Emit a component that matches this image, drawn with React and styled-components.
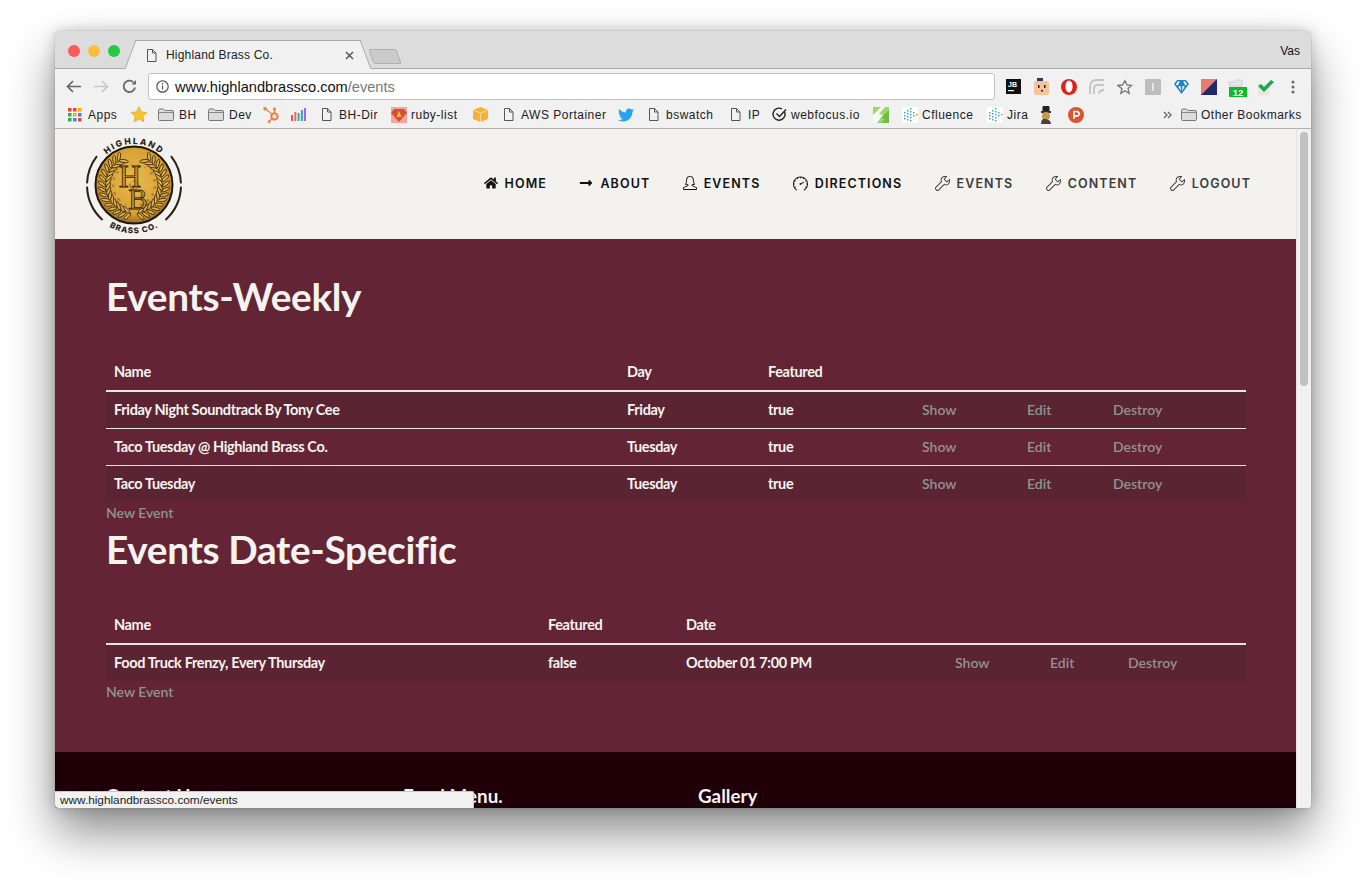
import React from "react";
import styled, { createGlobalStyle } from "styled-components";
import { FaHome, FaLongArrowAltRight, FaTwitter } from "react-icons/fa";
import { SlWrench, SlSpeedometer, SlUserFemale } from "react-icons/sl";
import { SiHubspot } from "react-icons/si";

const Global = createGlobalStyle`
  html, body { margin: 0; padding: 0; background: #fff; }
  * { box-sizing: border-box; }
`;

const Desktop = styled.div`
  width: 1367px;
  height: 889px;
  padding: 31px 56px 0 55px;
  overflow: hidden;
  background: #fff;
  font-family: "Liberation Sans", Arial, sans-serif;
`;

const BrowserWindow = styled.div`
  width: 1256px;
  height: 777px;
  border-radius: 5px 5px 3px 3px;
  overflow: hidden;
  display: flex;
  flex-direction: column;
  box-shadow: 0 24px 48px rgba(0, 0, 0, 0.46), 0 0 14px rgba(0, 0, 0, 0.2), 0 0 1px rgba(0, 0, 0, 0.5);
`;

const TitleBar = styled.div`
  height: 38px;
  flex: none;
  display: flex;
  align-items: flex-end;
  background: #dcdcdc;
  border-bottom: 1px solid #a8a8a8;
`;

const Lights = styled.div`
  display: flex;
  gap: 8px;
  align-self: flex-start;
  margin: 14px 0 0 13px;
`;

const Light = styled.span`
  width: 12px;
  height: 12px;
  border-radius: 50%;
  background: ${p => p.$c};
`;

const Tab = styled.div`
  position: relative;
  width: 222px;
  height: 29px;
  margin: 0 0 -1px 17px;
  padding: 0 5px 0 9px;
  display: flex;
  align-items: center;
  gap: 9px;
  font-size: 12px;
  color: #222;
  background: #f1f1f1;
  border-top: 1px solid #a8a8a8;
  &::before,
  &::after {
    content: "";
    position: absolute;
    top: -1px;
    bottom: 0;
    width: 14px;
    background: #f1f1f1;
    border-top: 1px solid #a8a8a8;
  }
  &::before {
    left: -7px;
    transform: skewX(-21deg);
    border-left: 1px solid #a8a8a8;
  }
  &::after {
    right: -7px;
    transform: skewX(21deg);
    border-right: 1px solid #a8a8a8;
  }
`;

const TabTitle = styled.span`
  position: relative;
  z-index: 1;
  flex: 1;
  letter-spacing: 0.2px;
`;

const TabClose = styled.span`
  position: relative;
  z-index: 1;
  display: flex;
  color: #555;
`;

const NewTab = styled.div`
  width: 28px;
  height: 15px;
  margin: 0 0 4px 12px;
  background: #cbcbcb;
  border: 1px solid #b0b0b0;
  border-radius: 2px;
  transform: skewX(20deg);
`;

const Profile = styled.div`
  margin-left: auto;
  align-self: flex-start;
  padding: 13px 11px 0 0;
  font-size: 12px;
  color: #111;
`;

const Toolbar = styled.div`
  height: 32px;
  flex: none;
  display: flex;
  align-items: flex-end;
  padding: 0 4px 1px 4px;
  background: #f1f1f1;
`;

const ToolSlot = styled.div`
  width: 28px;
  height: 27px;
  flex: none;
  display: flex;
  align-items: center;
  justify-content: center;
  position: relative;
`;

const Address = styled.div`
  flex: 1;
  height: 27px;
  margin: 0 4px 0 5px;
  padding-left: 7px;
  display: flex;
  align-items: center;
  gap: 6px;
  background: #fff;
  border: 1px solid #c2c2c2;
  border-radius: 3px;
  font-size: 14.6px;
  color: #111;
`;

const AddressPath = styled.span`
  color: #777;
`;

const Bookmarks = styled.div`
  height: 28px;
  flex: none;
  display: flex;
  align-items: center;
  padding: 0 0 0 13px;
  background: #f1f1f1;
  border-bottom: 1px solid #b0b0b0;
  font-size: 12px;
  letter-spacing: 0.5px;
  color: #1c1c1c;
`;

const Bookmark = styled.div`
  width: ${p => p.$w}px;
  flex: none;
  display: flex;
  align-items: center;
  gap: ${p => p.$gap || 5}px;
  white-space: nowrap;
`;

const Viewport = styled.div`
  position: relative;
  flex: 1;
  min-height: 0;
  display: flex;
  overflow: hidden;
`;

const Site = styled.div`
  flex: 1;
  min-width: 0;
  font-family: Lato, sans-serif;
`;

const Track = styled.div`
  width: 15px;
  flex: none;
  padding: 3px;
  background: #f1f1f1;
  border-left: 1px solid #e4e4e4;
`;

const Thumb = styled.div`
  height: 254px;
  border-radius: 5px;
  background: #c1c1c1;
`;

const SiteHeader = styled.header`
  height: 110px;
  display: flex;
  align-items: center;
  justify-content: space-between;
  padding: 0 45px 0 30px;
  background: #f3f2ee;
`;

const Nav = styled.nav`
  display: flex;
  gap: 32.4px;
  padding-bottom: 2px;
`;

const NavLink = styled.a`
  display: flex;
  align-items: center;
  gap: 7px;
  font-family: Inter, sans-serif;
  font-size: 12.5px;
  font-weight: 600;
  letter-spacing: 1.1px;
  color: ${p => (p.$muted ? "#3c3c3c" : "#111")};
`;

const Main = styled.main`
  padding: 34px 49px 49px 51px;
  background: #632536;
`;

const Heading = styled.h1`
  margin: ${p => (p.$second ? "2px" : "0")} 0 33px;
  font-family: Lato, sans-serif;
  font-size: 38.8px;
  line-height: 46px;
  font-weight: 700;
  letter-spacing: -0.35px;
  color: #f5f3ee;
`;

const Table = styled.table`
  width: 1140px;
  table-layout: fixed;
  border-collapse: separate;
  border-spacing: 0;
  font-size: 14.5px;
  letter-spacing: -0.36px;
  font-weight: 700;
  color: #f5f3ee;
`;

const Th = styled.th`
  padding: 9px 8px 7px;
  line-height: 22px;
  text-align: left;
  font-weight: 700;
  border-bottom: 2px solid #e6e6e6;
`;

const Row = styled.tr`
  background: ${p => (p.$odd ? "#5b2433" : "transparent")};
`;

const Td = styled.td`
  padding: 8px;
  line-height: 20px;
  border-top: ${p => (p.$first ? "0" : "1px solid #e6e6e6")};
`;

const RowLink = styled.a`
  font-size: 14px;
  letter-spacing: 0;
  color: #929292;
  font-weight: 600;
`;

const NewLink = styled.a`
  display: block;
  font-size: 14px;
  line-height: 22px;
  font-weight: 600;
  color: #929292;
`;

const SiteFooter = styled.footer`
  height: 200px;
  display: flex;
  padding: 33px 0 0 51px;
  background: #1f0008;
`;

const FooterColumn = styled.div`
  width: ${p => p.$w}px;
  flex: none;
  font-size: 18.8px;
  line-height: 22px;
  font-weight: 700;
  color: #f5f3ee;
`;

const StatusBubble = styled.div`
  position: absolute;
  left: 0;
  bottom: 0;
  width: 419px;
  height: 17px;
  padding-left: 5px;
  display: flex;
  align-items: center;
  font-family: "Liberation Sans", Arial, sans-serif;
  font-size: 11.8px;
  color: #222;
  background: #f1f1f1;
  border-top: 1px solid #c8c8c8;
  border-right: 1px solid #c8c8c8;
  border-radius: 0 2px 0 3px;
`;

const Page = () => (
  <svg width="11" height="13" viewBox="0 0 11 13" fill="none" stroke="#555" strokeWidth="1">
    <path d="M1.500.5h5l3.500 3.500v8.500h-8.500zM6.500.5v3.500h3.500" />
  </svg>
);

const Folder = () => (
  <svg width="16" height="13" viewBox="0 0 16 13">
    <path d="M.5 2.500Q.5 1 2 1h3.500l1.500 1.500h7q1.500 0 1.500 1.500v7.500q0 1-1 1h-13q-1 0-1-1z" fill="#dcdcdc" stroke="#777" />
    <path d="M.5 4.500h15" stroke="#888" />
  </svg>
);

const Apps = () => (
  <svg width="14" height="14" viewBox="0 0 14 14">
    {["#e8453c", "#e8453c", "#f4b400", "#34a853", "#f4b400", "#4285f4", "#34a853", "#4285f4", "#e8453c"].map((c, i) => (
      <rect key={i} x={(i % 3) * 5} y={Math.floor(i / 3) * 5} width="3.500" height="3.500" fill={c} />
    ))}
  </svg>
);

const Star = () => (
  <svg width="18" height="17" viewBox="0 0 24 24">
    <path d="M12 1l3.300 7.300 7.900.9-5.900 5.300 1.700 7.800L12 18.300 5 22.300l1.700-7.800L.8 9.200l7.900-.9z" fill="#f5c32c" stroke="#e89f1c" />
  </svg>
);

const Bars = () => (
  <svg width="15" height="13" viewBox="0 0 15 13">
    <rect x="0" y="7" width="2" height="6" fill="#ef4c7a" />
    <rect x="3.300" y="4" width="2" height="9" fill="#f26a4b" />
    <rect x="6.600" y="5" width="2" height="8" fill="#2ab5a5" />
    <rect x="9.900" y="2" width="2" height="11" fill="#4a8fe0" />
    <rect x="13" y="0" width="2" height="13" fill="#a46ad8" />
  </svg>
);

const Ruby = () => (
  <svg width="16" height="16" viewBox="0 0 16 16">
    <rect width="16" height="16" fill="#eda79c" />
    <path d="M3 2h10l3 4-8 9-8-9z" fill="#dd4a36" />
    <path d="M5.500 10l2.500-6 2.500 6z" fill="#f3c244" />
  </svg>
);

const Cube = () => (
  <svg width="15" height="15" viewBox="0 0 15 15">
    <path d="M7.500 0L15 3v9l-7.500 3L0 12V3z" fill="#f4b13c" />
    <path d="M0 3l7.500 3L15 3M7.500 6v9" stroke="#fbdb94" fill="none" />
  </svg>
);

const Check = () => (
  <svg width="15" height="15" viewBox="0 0 15 15" fill="none" stroke="#222" strokeWidth="1.400">
    <path d="M12.600 5A6 6 0 1 1 10 2" />
    <path d="M4.500 6.500l3 3L14 2.500" />
  </svg>
);

const GreenTile = () => (
  <svg width="16" height="16" viewBox="0 0 16 16">
    <rect width="16" height="16" fill="#9bd86a" />
    <path d="M0 8l8-8h4L6 7l4 1-6 8H0z" fill="#fff" opacity=".9" />
    <path d="M16 3L8 11l4 1-3 4h7z" fill="#72bb42" />
  </svg>
);

const Dots = () => (
  <svg width="16" height="16" viewBox="0 0 16 16">
    <rect width="16" height="16" fill="#fff" />
    {[[8, 1], [8, 4], [5, 3], [11, 5], [8, 7], [5, 6], [5, 9], [2, 5], [2, 8], [11, 8], [14, 7], [8, 10], [5, 12], [8, 13], [2, 11]].map(([x, y], i) => (
      <rect key={i} x={x} y={y} width="1.500" height="1.500" fill={x > 12 ? "#ef8a3c" : "#35a7c9"} />
    ))}
  </svg>
);

const Bandit = () => (
  <svg width="12" height="18" viewBox="0 0 12 18">
    <rect x="2.500" y="0" width="7" height="6" rx="1" fill="#222" />
    <rect x="1" y="5" width="10" height="2" fill="#333" />
    <circle cx="6" cy="10" r="4" fill="#c59a4a" />
    <path d="M1 18q0-6 5-5t5 5z" fill="#444" />
  </svg>
);

const PBadge = () => (
  <svg width="16" height="16" viewBox="0 0 16 16">
    <circle cx="8" cy="8" r="8" fill="#da552f" />
    <path d="M6 12V4.500h2.800a2.300 2.300 0 0 1 0 4.600H6" fill="none" stroke="#fff" strokeWidth="1.600" />
  </svg>
);

function Chevrons() {
  return (
    <svg width="9" height="8" viewBox="0 0 9 8" fill="none" stroke="#666" strokeWidth="1.300">
      <path d="M1 1l3 3-3 3M5 1l3 3-3 3" />
    </svg>
  );
}

const bookmarks = [
  { w: 62, icon: <Apps />, label: "Apps", gap: 6 },
  { w: 28, icon: <Star /> },
  { w: 50, icon: <Folder />, label: "BH" },
  { w: 55, icon: <Folder />, label: "Dev" },
  { w: 28, icon: <SiHubspot size={16} color="#f27a3c" /> },
  { w: 30, icon: <Bars /> },
  { w: 70, icon: <Page />, label: "BH-Dir", gap: 7 },
  { w: 82, icon: <Ruby />, label: "ruby-list", gap: 4 },
  { w: 30, icon: <Cube /> },
  { w: 115, icon: <Page />, label: "AWS Portainer", gap: 7 },
  { w: 30, icon: <FaTwitter size={16} color="#2aa3ef" /> },
  { w: 82, icon: <Page />, label: "bswatch", gap: 7 },
  { w: 42, icon: <Page />, label: "IP", gap: 7 },
  { w: 101, icon: <Check />, label: "webfocus.io", gap: 4 },
  { w: 29, icon: <GreenTile /> },
  { w: 85, icon: <Dots />, label: "Cfluence", gap: 4 },
  { w: 53, icon: <Dots />, label: "Jira", gap: 4 },
  { w: 28, icon: <Bandit /> },
  { w: 95, icon: <PBadge /> },
  { w: 18, icon: <Chevrons /> },
  { w: 125, icon: <Folder />, label: "Other Bookmarks", gap: 4 }
];

const toolIcons = [
  <svg width="15" height="15" viewBox="0 0 15 15" key="jb">
    <rect width="15" height="15" fill="#111" />
    <text x="2" y="8" fontSize="7" fontWeight="700" fontFamily="Liberation Sans" fill="#fff">JB</text>
    <rect x="2" y="11" width="6" height="1.200" fill="#fff" />
  </svg>,
  <svg width="15" height="17" viewBox="0 0 15 17" key="face">
    <rect y="3" width="15" height="14" rx="2" fill="#f4c49a" />
    <rect x="3" y="0" width="6" height="3" fill="#2b3a67" />
    <rect x="4" y="7" width="1.500" height="3" fill="#222" />
    <rect x="10" y="7" width="1.500" height="3" fill="#222" />
    <rect x="7" y="12" width="2" height="1.500" fill="#222" />
  </svg>,
  <svg width="16" height="16" viewBox="0 0 16 16" key="opera">
    <circle cx="8" cy="8" r="8" fill="#e0201b" />
    <ellipse cx="8" cy="7.500" rx="3.600" ry="6" fill="#fff" />
  </svg>,
  <svg width="16" height="16" viewBox="0 0 16 16" fill="none" stroke="#c4c4c4" strokeWidth="1.800" key="feed">
    <path d="M1 15V8q0-7 7-7h7M5 15v-5q0-4 4-4h6M10 15q0-4 5-4" />
  </svg>,
  <svg width="16" height="16" viewBox="0 0 24 24" fill="none" stroke="#777" strokeWidth="2" key="star">
    <path d="M12 2.500l2.900 6.500 7 .7-5.300 4.700 1.600 7-6.200-3.700-6.200 3.700 1.600-7L1.100 9.700l7-.7z" />
  </svg>,
  <svg width="16" height="16" viewBox="0 0 16 16" key="i">
    <rect width="16" height="16" rx="1" fill="#bdbdbd" />
    <rect x="7" y="4" width="2" height="8" fill="#e6e6e6" />
  </svg>,
  <svg width="15" height="15" viewBox="0 0 15 15" key="gem">
    <path d="M3 1h9l3 4-7.500 10L0 5z" fill="#1d86c9" />
    <path d="M3.500 2.500h2.300L4 6H1.800zM11.500 2.500H9.200L11 6h2.200zM4.200 7.200L6.500 7l.4 5zM10.800 7.200L8.500 7l-.4 5z" fill="#fff" />
  </svg>,
  <svg width="16" height="16" viewBox="0 0 16 16" key="flag">
    <rect width="16" height="16" fill="#e77c77" />
    <path d="M16 0v16H0z" fill="#1f2a6b" />
  </svg>,
  <svg width="20" height="20" viewBox="0 0 20 20" key="badge">
    <path d="M2 5h5l2-2h6v6H2z" fill="#e6e6e6" stroke="#d0d0d0" />
    <rect x="2" y="10" width="18" height="10" fill="#10b82c" />
    <text x="11" y="18.500" fontSize="9.500" fontWeight="700" textAnchor="middle" fontFamily="Liberation Sans" fill="#fff">12</text>
  </svg>,
  <svg width="17" height="16" viewBox="0 0 17 16" key="tick">
    <rect x="1" y="5" width="11" height="11" fill="#e7e7df" />
    <path d="M1 7l3-2 3 3 7-7 3 2-10 10z" fill="#18a754" />
  </svg>,
  <svg width="4" height="14" viewBox="0 0 4 14" fill="#666" key="menu">
    <circle cx="2" cy="2" r="1.500" />
    <circle cx="2" cy="7" r="1.500" />
    <circle cx="2" cy="12" r="1.500" />
  </svg>
];

const polar = (cx, cy, r, deg) => {
  const a = (deg * Math.PI) / 180;
  return [cx + r * Math.cos(a), cy + r * Math.sin(a)];
};

const arc = (r, from, to) => {
  const [x1, y1] = polar(49, 53, r, from);
  const [x2, y2] = polar(49, 53, r, to);
  return `M${x1} ${y1}A${r} ${r} 0 0 1 ${x2} ${y2}`;
};

const leaves = [];
for (let deg = 102; deg <= 248; deg += 10) {
  const [x, y] = polar(49, 53, 32, deg);
  const [ix, iy] = polar(49, 53, 26, deg + 5);
  leaves.push({ x, y, rot: deg + 35 }, { x: 98 - x, y, rot: 180 - deg - 35 });
  leaves.push({ x: ix, y: iy, rot: deg + 125 }, { x: 98 - ix, y: iy, rot: 180 - deg - 125 });
}

// deterministic mottling for the brass disc
const specks = Array.from({ length: 46 }, (_, i) => {
  const [x, y] = polar(49, 53, 4 + ((i * 17) % 34), i * 137.5);
  return { x, y, r: 0.5 + ((i * 7) % 4) * 0.3 };
});

const Logo = () => (
  <svg width="100" height="104" viewBox="0 0 100 104">
    <defs>
      <radialGradient id="gold" cx="50%" cy="45%" r="60%">
        <stop offset="0" stopColor="#e9b94a" />
        <stop offset=".7" stopColor="#d7a137" />
        <stop offset="1" stopColor="#7d581c" />
      </radialGradient>
      <path id="topCurve" d={arc(41, 200, 340)} />
      <path id="bottomCurve" d="M9.300 80.800A48.500 48.500 0 0 0 88.700 80.800" />
    </defs>
    <path d={arc(47, 322, 358)} fill="none" stroke="#2a2117" strokeWidth="2" />
    <path d={arc(47, 2, 48)} fill="none" stroke="#2a2117" strokeWidth="2" />
    <path d={arc(47, 132, 178)} fill="none" stroke="#2a2117" strokeWidth="2" />
    <path d={arc(47, 182, 218)} fill="none" stroke="#2a2117" strokeWidth="2" />
    <circle cx="49" cy="53" r="38.500" fill="url(#gold)" stroke="#1e170e" strokeWidth="2" />
    {specks.map((s, i) => (
      <circle key={i} cx={s.x} cy={s.y} r={s.r} fill="#8a6220" opacity=".55" />
    ))}
    {leaves.map((l, i) => (
      <ellipse key={i} cx={l.x} cy={l.y} rx="4.500" ry="1.500" fill="#e0b04a" stroke="#33240c" strokeWidth=".8" transform={`rotate(${l.rot} ${l.x} ${l.y})`} />
    ))}
    <text x="45" y="55" textAnchor="middle" fontFamily="Liberation Serif" fontSize="31" fill="#c38f30" stroke="#33240c" strokeWidth=".8">H</text>
    <text x="53" y="77" textAnchor="middle" fontFamily="Liberation Serif" fontSize="29" fill="#c38f30" stroke="#33240c" strokeWidth=".8">B</text>
    <text fontFamily="Inter" fontWeight="800" fontSize="8.500" letterSpacing="1.800" fill="#2a2117">
      <textPath href="#topCurve" startOffset="50%" textAnchor="middle">HIGHLAND</textPath>
    </text>
    <text fontFamily="Inter" fontWeight="800" fontSize="8" letterSpacing=".900" fill="#2a2117">
      <textPath href="#bottomCurve" startOffset="50%" textAnchor="middle">BRASS CO.</textPath>
    </text>
  </svg>
);

const navLinks = [
  { icon: <FaHome size={14} />, label: "HOME" },
  { icon: <FaLongArrowAltRight size={14} />, label: "ABOUT" },
  { icon: <SlUserFemale size={14} />, label: "EVENTS" },
  { icon: <SlSpeedometer size={15} />, label: "DIRECTIONS" },
  { icon: <SlWrench size={15} />, label: "EVENTS", muted: true },
  { icon: <SlWrench size={15} />, label: "CONTENT", muted: true },
  { icon: <SlWrench size={15} />, label: "LOGOUT", muted: true }
];

const weekly = [
  ["Friday Night Soundtrack By Tony Cee", "Friday", "true"],
  ["Taco Tuesday @ Highland Brass Co.", "Tuesday", "true"],
  ["Taco Tuesday", "Tuesday", "true"]
];

const dated = [["Food Truck Frenzy, Every Thursday", "false", "October 01 7:00 PM"]];

const actions = ["Show", "Edit", "Destroy"];

const EventTable = ({ widths, headers, rows }) => (
  <Table>
    <colgroup>
      {widths.map((w, i) => (
        <col key={i} width={w} />
      ))}
    </colgroup>
    <thead>
      <tr>
        {widths.map((w, i) => (
          <Th key={i}>{headers[i]}</Th>
        ))}
      </tr>
    </thead>
    <tbody>
      {rows.map((row, r) => (
        <Row key={r} $odd={r % 2 === 0}>
          {row.map((cell, c) => (
            <Td key={c} $first={r === 0}>{cell}</Td>
          ))}
          {actions.map(a => (
            <Td key={a} $first={r === 0}>
              <RowLink>{a}</RowLink>
            </Td>
          ))}
        </Row>
      ))}
    </tbody>
  </Table>
);

export default function App() {
  return (
    <Desktop>
      <Global />
      <BrowserWindow>
        <TitleBar>
          <Lights>
            <Light $c="#fc5b57" />
            <Light $c="#fdbc40" />
            <Light $c="#26c940" />
          </Lights>
          <Tab>
            <Page />
            <TabTitle>Highland Brass Co.</TabTitle>
            <TabClose>
              <svg width="9" height="9" viewBox="0 0 9 9" stroke="#555" strokeWidth="1.500">
                <path d="M1 1l7 7M8 1l-7 7" />
              </svg>
            </TabClose>
          </Tab>
          <NewTab />
          <Profile>Vas</Profile>
        </TitleBar>
        <Toolbar>
          <ToolSlot>
            <svg width="15" height="13" viewBox="0 0 15 13" fill="none" stroke="#666" strokeWidth="1.700">
              <path d="M15 6.500H2M7 1L1.500 6.500 7 12" />
            </svg>
          </ToolSlot>
          <ToolSlot>
            <svg width="15" height="13" viewBox="0 0 15 13" fill="none" stroke="#c8c8c8" strokeWidth="1.700">
              <path d="M0 6.500h13M8 1l5.500 5.500L8 12" />
            </svg>
          </ToolSlot>
          <ToolSlot>
            <svg width="15" height="15" viewBox="0 0 15 15" fill="none" stroke="#666" strokeWidth="1.800">
              <path d="M13 8.500A5.700 5.700 0 1 1 11.300 3.200" />
              <path d="M9.500 5.500H14V1z" fill="#666" stroke="none" />
            </svg>
          </ToolSlot>
          <Address>
            <svg width="13" height="13" viewBox="0 0 13 13" fill="none" stroke="#555" strokeWidth="1.200">
              <circle cx="6.500" cy="6.500" r="5.700" />
              <path d="M6.500 5.500v4M6.500 3v1.400" />
            </svg>
            <span>
              www.highlandbrassco.com<AddressPath>/events</AddressPath>
            </span>
          </Address>
          {toolIcons.map((icon, i) => (
            <ToolSlot key={i}>{icon}</ToolSlot>
          ))}
        </Toolbar>
        <Bookmarks>
          {bookmarks.map((b, i) => (
            <Bookmark key={i} $w={b.w} $gap={b.gap}>
              {b.icon}
              {b.label && <span>{b.label}</span>}
            </Bookmark>
          ))}
        </Bookmarks>
        <Viewport>
          <Site>
            <SiteHeader>
              <Logo />
              <Nav>
                {navLinks.map((n, i) => (
                  <NavLink key={i} $muted={n.muted}>
                    {n.icon}
                    {n.label}
                  </NavLink>
                ))}
              </Nav>
            </SiteHeader>
            <Main>
              <Heading>Events-Weekly</Heading>
              <EventTable
                widths={[513, 141, 154, 105, 86, 141]}
                headers={["Name", "Day", "Featured"]}
                rows={weekly}
              />
              <NewLink>New Event</NewLink>
              <Heading $second>Events Date-Specific</Heading>
              <EventTable
                widths={[434, 138, 269, 95, 78, 126]}
                headers={["Name", "Featured", "Date"]}
                rows={dated}
              />
              <NewLink>New Event</NewLink>
            </Main>
            <SiteFooter>
              <FooterColumn $w={297}>Contact Us</FooterColumn>
              <FooterColumn $w={295}>Food Menu.</FooterColumn>
              <FooterColumn $w={300}>Gallery</FooterColumn>
            </SiteFooter>
          </Site>
          <Track>
            <Thumb />
          </Track>
          <StatusBubble>www.highlandbrassco.com/events</StatusBubble>
        </Viewport>
      </BrowserWindow>
    </Desktop>
  );
}
